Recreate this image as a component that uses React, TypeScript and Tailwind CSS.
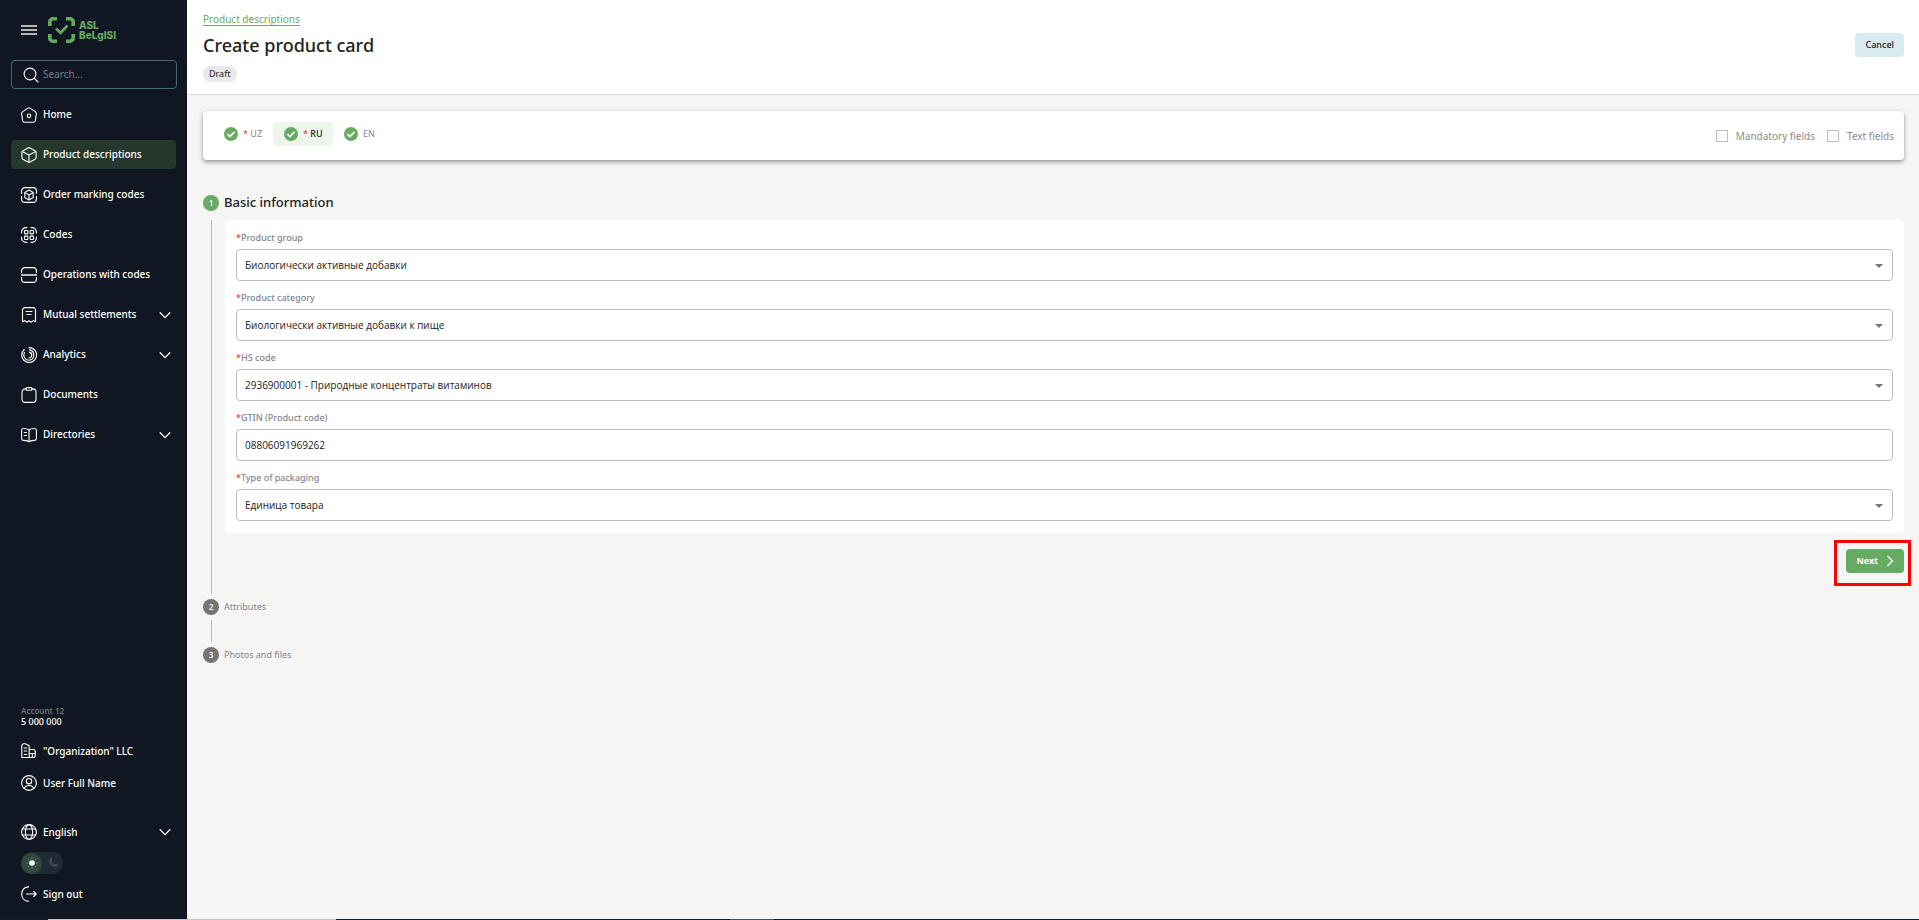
import { useState, type ReactNode } from "react";

const Icon = ({ children, className = "size-4" }: { children: ReactNode; className?: string }) => (
  <svg
    viewBox="0 0 16 16"
    fill="none"
    stroke="currentColor"
    strokeWidth="1.1"
    strokeLinecap="round"
    strokeLinejoin="round"
    aria-hidden="true"
    className={`${className} shrink-0`}
  >
    {children}
  </svg>
);

const Chevron = () => (
  <Icon className="size-3">
    <path d="M1.5 5 8 11.500 14.500 5" strokeWidth="1.700" />
  </Icon>
);

const icons = {
  home: (
    <>
      <path d="M7 1.100 1.700 4.600A2.400 2.400 0 0 0 .7 7l.9 6.300a2.400 2.400 0 0 0 2.300 2h8.200a2.400 2.400 0 0 0 2.300-2l.9-6.300a2.400 2.400 0 0 0-1-2.400L9 1.100a1.800 1.800 0 0 0-2 0Z" />
      <circle cx="8" cy="8.800" r="1.800" />
    </>
  ),
  box: (
    <>
      <path d="M7.100.9a2 2 0 0 1 1.800 0l5.200 2.800a2 2 0 0 1 1 1.700v5.200a2 2 0 0 1-1 1.700l-5.200 2.800a2 2 0 0 1-1.800 0l-5.200-2.800a2 2 0 0 1-1-1.700V5.400a2 2 0 0 1 1-1.700Z" />
      <path d="M1.300 4.500 8 8l6.700-3.500M8 8v7" />
    </>
  ),
  order: (
    <>
      <path d="M.6 6.500V4A3.400 3.400 0 0 1 4 .6h8A3.400 3.400 0 0 1 15.400 4v2.500M.6 9.500V12A3.400 3.400 0 0 0 4 15.400h8a3.400 3.400 0 0 0 3.400-3.400V9.500" />
      <path d="M8 3 12.200 5.400v5.200L8 13 3.800 10.600V5.400ZM4 5.600 8 8l4-2.400M8 8v4.700" />
    </>
  ),
  codes: (
    <>
      <path d="M.6 6V5A4.400 4.400 0 0 1 5 .6h1M10 .6h1A4.400 4.400 0 0 1 15.400 5v1M15.400 10v1a4.400 4.400 0 0 1-4.400 4.400h-1M6 15.400H5A4.400 4.400 0 0 1 .6 11v-1" />
      <rect x="3.500" y="3.500" width="3.400" height="3.400" rx=".6" />
      <rect x="9.100" y="3.500" width="3.400" height="3.400" rx=".6" />
      <rect x="3.500" y="9.100" width="3.400" height="3.400" rx=".6" />
      <rect x="9.100" y="9.100" width="3.400" height="3.400" rx=".6" />
    </>
  ),
  operations: (
    <>
      <path d="M.6 5.800V4A3.400 3.400 0 0 1 4 .6h8A3.400 3.400 0 0 1 15.400 4v1.800M.6 10.200V12A3.400 3.400 0 0 0 4 15.400h8a3.400 3.400 0 0 0 3.400-3.400v-1.800" />
      <path d="M.6 8h14.800" strokeWidth="1.800" strokeOpacity=".7" />
    </>
  ),
  settlements: (
    <>
      <path d="M1.500 3.300A2.600 2.600 0 0 1 4 .6h8a2.600 2.600 0 0 1 2.500 2.700v11.500l-2.300-1.200-2 1.600L8 13.700l-2.200 1.500-2-1.600-2.300 1.200Z" />
      <path d="M5 4.500h6M6 7.500h4" />
    </>
  ),
  analytics: (
    <>
      <path d="M3.200 2.500A7.400 7.400 0 1 0 8 .6" />
      <path d="M3.400 5.500A5.200 5.200 0 0 0 8 13.200 5.200 5.200 0 0 0 8.500 2.900" />
      <path d="M8 11a3 3 0 0 0 .5-5.900" />
    </>
  ),
  documents: (
    <>
      <path d="M5 1.900H4.400A3.400 3.400 0 0 0 1 5.300V12a3.400 3.400 0 0 0 3.400 3.400h7.200A3.400 3.400 0 0 0 15 12V5.300a3.400 3.400 0 0 0-3.400-3.400H11" />
      <path d="M6 .6h4a1 1 0 0 1 1 1v.7a1 1 0 0 1-1 1H6a1 1 0 0 1-1-1v-.7a1 1 0 0 1 1-1Z" />
    </>
  ),
  directories: (
    <>
      <path d="M8 3v11.500M8 3C6 1.500 4 1.300 2.200 1.500 1.200 1.600.6 2.200.6 3.200v8.600c0 .9.700 1.600 1.600 1.600 2 0 4 .1 5.800 1.300 1.800-1.200 3.800-1.300 5.800-1.300.9 0 1.600-.7 1.600-1.600V3.200c0-1-.6-1.600-1.600-1.700C12 1.300 10 1.500 8 3Z" />
      <path d="M3.200 5.500h2.200M3.200 8.500h2.200" />
    </>
  ),
  organization: (
    <>
      <path d="M.8 14.500V2.800a2 2 0 0 1 2-2.100h1.600l3.800 2.100v11.700ZM8.400 6.500h3.800a2 2 0 0 1 2 2v4a2 2 0 0 1-2 2H.8" />
      <path d="M3.200 5h2.600M3.200 8h2.600M8.400 10.500h5.600M11.300 10.500v4M3.200 11.500h2.600" />
    </>
  ),
  user: (
    <>
      <circle cx="8" cy="8" r="7.400" />
      <circle cx="8" cy="6.200" r="2.700" />
      <path d="M3.300 13.500c.6-2 2.400-3 4.700-3s4.100 1 4.700 3" />
    </>
  ),
  globe: (
    <>
      <circle cx="8" cy="8" r="7.400" />
      <ellipse cx="8" cy="8" rx="3.600" ry="7.400" />
      <path d="M1.300 5h13.400M1.300 11h13.400" />
    </>
  ),
  signOut: (
    <>
      <path d="M7.500.9C3.500 1 .7 4 .7 8s2.800 7 6.800 7.300" />
      <path d="M5.500 8h9.700M12.700 5.500 15.200 8l-2.500 2.500" />
    </>
  ),
};

type IconName = keyof typeof icons;

const navItems: { label: string; icon: IconName; active?: boolean; expandable?: boolean }[] = [
  { label: "Home", icon: "home" },
  { label: "Product descriptions", icon: "box", active: true },
  { label: "Order marking codes", icon: "order" },
  { label: "Codes", icon: "codes" },
  { label: "Operations with codes", icon: "operations" },
  { label: "Mutual settlements", icon: "settlements", expandable: true },
  { label: "Analytics", icon: "analytics", expandable: true },
  { label: "Documents", icon: "documents" },
  { label: "Directories", icon: "directories", expandable: true },
];

const Logo = () => (
  <a href="#" aria-label="ASL Belgisi" className="flex items-center gap-1 text-[#64a95f]">
    <svg viewBox="0 0 27 26" fill="none" stroke="currentColor" strokeWidth="3.600" className="h-[26px] w-[27px]" aria-hidden="true">
      <path d="M1.800 9V5a3.200 3.200 0 0 1 3.200-3.200h4M18 1.800h4A3.200 3.200 0 0 1 25.200 5v4M25.200 17v4a3.200 3.200 0 0 1-3.200 3.200h-4M9 24.200H5A3.200 3.200 0 0 1 1.800 21v-4" />
      <path d="m8 11.500 4.500 4.500 7-7.500" strokeWidth="2.600" />
    </svg>
    <span className="flex flex-col font-[Inter,sans-serif] text-[10px] leading-[10px] font-extrabold">
      <span>ASL</span>
      <span>BeLgISI</span>
    </span>
  </a>
);

const Sidebar = () => (
  <aside className="flex w-[187px] shrink-0 flex-col bg-[#111722] text-white">
    <div className="flex items-center gap-[11px] pt-[17px] pl-[21px]">
      <button type="button" aria-label="Menu" className="flex w-4 flex-col gap-[2px] text-[#b5b6ba]">
        <span className="h-[2px] bg-current" />
        <span className="h-[2px] bg-current" />
        <span className="h-[2px] bg-current" />
      </button>
      <Logo />
    </div>

    <label className="mr-[10px] ml-[11px] mt-[17px] flex h-[29px] items-center gap-1 rounded border border-[#426a7a] pl-[11px]">
      <Icon>
        <circle cx="7" cy="7" r="5.900" />
        <path d="m11.500 11.500 3.500 3.500" />
      </Icon>
      <input
        type="search"
        aria-label="Search"
        placeholder="Search..."
        className="w-0 grow bg-transparent text-[10px] outline-none placeholder:text-[#7b7f86]"
      />
    </label>

    <nav className="mx-[11px] mt-[11px] flex flex-col gap-[11px]">
      {navItems.map((item) => (
        <a
          key={item.label}
          href="#"
          aria-current={item.active ? "page" : undefined}
          className={`flex h-[29px] items-center gap-[6px] rounded pr-[5px] pl-[10px] text-[10px] font-medium ${item.active ? "bg-[#24382d]" : ""}`}
        >
          <Icon>{icons[item.icon]}</Icon>
          <span className="grow whitespace-nowrap">{item.label}</span>
          {item.expandable && <Chevron />}
        </a>
      ))}
    </nav>

    <div className="mt-auto flex flex-col pr-4 pb-[17px] pl-[21px] text-[10px] font-medium">
      <p className="text-[8px] leading-[11px] font-semibold text-[#70757e]">Account 12</p>
      <p className="text-[9px] leading-[11px]">5 000 000</p>
      <a href="#" className="mt-4 flex h-4 items-center gap-[6px]">
        <Icon>{icons.organization}</Icon>"Organization" LLC
      </a>
      <a href="#" className="mt-4 flex h-4 items-center gap-[6px]">
        <Icon>{icons.user}</Icon>User Full Name
      </a>
      <button type="button" className="mt-[33px] flex h-4 items-center gap-[6px] text-left">
        <Icon>{icons.globe}</Icon>
        <span className="grow">English</span>
        <Chevron />
      </button>
      <button type="button" aria-label="Theme" className="mt-3 flex h-[22px] w-[42px] items-center rounded-full bg-[#202b37]">
        <span className="flex size-[21px] items-center justify-center rounded-full bg-[#2f4a3c]">
          <svg viewBox="0 0 12 12" className="size-3" fill="white" stroke="white" aria-hidden="true">
            <circle cx="6" cy="6" r="2.800" stroke="none" />
            <path d="M6 .5v1M6 10.500v1M.5 6h1M10.500 6h1M2.100 2.100l.7.7M9.200 9.200l.7.7M2.100 9.900l.7-.7M9.200 2.800l.7-.7" strokeOpacity=".5" />
          </svg>
        </span>
        <span className="flex grow justify-center text-[#59636e]">
          <Icon className="size-[10px]">
            <path d="M5 1a7 7 0 1 0 10 10A8 8 0 0 1 5 1Z" strokeWidth="1.500" />
          </Icon>
        </span>
      </button>
      <a href="#" className="mt-3 flex h-4 items-center gap-[6px]">
        <Icon>{icons.signOut}</Icon>Sign out
      </a>
    </div>
  </aside>
);

const CheckBadge = () => (
  <svg viewBox="0 0 14 14" className="size-[14px] shrink-0" aria-hidden="true">
    <circle cx="7" cy="7" r="7" fill="#67ab62" />
    <path d="m3.500 7.200 2.400 2.300 4.600-4.600" fill="none" stroke="white" strokeWidth="1.700" />
  </svg>
);

const languages = [
  { code: "UZ", required: true },
  { code: "RU", required: true },
  { code: "EN", required: false },
];

const LanguageBar = () => {
  const [current, setCurrent] = useState("RU");
  return (
    <section className="flex h-[49px] items-start justify-between rounded bg-white pt-[11px] pr-[10px] pl-[10px] shadow-[0_2px_4px_rgba(60,70,60,0.55)]">
      <div className="flex" role="tablist">
        {languages.map(({ code, required }) => (
          <button
            key={code}
            type="button"
            role="tab"
            aria-selected={current === code}
            onClick={() => setCurrent(code)}
            className={`flex h-6 w-[60px] items-center gap-[5px] rounded pl-[11px] text-[9px] ${
              current === code ? "bg-[#edf5ed] font-medium text-[#222]" : "text-[#80858f]"
            }`}
          >
            <CheckBadge />
            <span>
              {required && <span className="text-[#d5443c]">* </span>}
              {code}
            </span>
          </button>
        ))}
      </div>
      <div className="flex h-7 items-center gap-3 text-[10px] text-[#8b8b8b]">
        {["Mandatory fields", "Text fields"].map((label) => (
          <label key={label} className="flex items-center gap-2">
            <input type="checkbox" className="size-3 appearance-none border border-[#bcbcbc] bg-white checked:bg-[#67ab62]" />
            {label}
          </label>
        ))}
      </div>
    </section>
  );
};

const fields = [
  { id: "group", label: "Product group", value: "Биологически активные добавки", select: true },
  { id: "category", label: "Product category", value: "Биологически активные добавки к пище", select: true },
  { id: "hs", label: "HS code", value: "2936900001 - Природные концентраты витаминов", select: true },
  { id: "gtin", label: "GTIN (Product code)", value: "08806091969262", select: false },
  { id: "packaging", label: "Type of packaging", value: "Единица товара", select: true },
];

const controlClass =
  "h-8 w-full appearance-none rounded border border-[#bdbdbd] bg-white px-2 font-['Open_Sans','Noto_Sans',sans-serif] text-[10px] text-[#222] outline-none";

const StepBadge = ({ number, active = false }: { number: number; active?: boolean }) => (
  <span
    className={`flex size-4 shrink-0 items-center justify-center rounded-full text-[8px] font-semibold text-white ${
      active ? "bg-[#67ab62]" : "bg-[#757575]"
    }`}
  >
    {number}
  </span>
);

export default function App() {
  return (
    <div className="flex min-h-screen flex-col bg-[#f5f5f3] font-['Noto_Sans','Open_Sans',sans-serif] text-[#222]">
      <div className="flex grow">
        <Sidebar />
        <div className="flex min-w-0 grow flex-col">
          <header className="flex items-start justify-between border-b border-[#dcdddf] bg-white pr-[15px] pb-3 pl-4">
            <div className="flex flex-col items-start pt-[13px]">
              <a href="#" className="border-b border-[#67ab62] text-[10px] leading-3 text-[#67ab62]">
                Product descriptions
              </a>
              <h1 className="mt-[7px] mb-[9px] text-[18px] leading-6 font-medium">Create product card</h1>
              <span className="rounded-full bg-[#e9e9e9] px-[6px] text-[9px] leading-4">Draft</span>
            </div>
            <button type="button" className="mt-[33px] h-6 rounded bg-[#d9ecf2] px-[10px] text-[9px] font-medium">
              Cancel
            </button>
          </header>

          <main className="pt-4 pr-[15px] pl-4">
            <LanguageBar />

            <ol className="mt-[35px] flex flex-col">
              <li>
                <div className="flex h-4 items-center gap-[5px]">
                  <StepBadge number={1} active />
                  <h2 className="text-[13px] font-medium">Basic information</h2>
                </div>
                <div className="mt-[9px] ml-2 border-l border-[#bdbdbd] pb-[21px] pl-[13px]">
                  <div className="flex flex-col gap-[10px] rounded bg-white px-[11px] pt-[11px] pb-3">
                    {fields.map((field) => (
                      <div key={field.id} className="flex flex-col">
                        <label htmlFor={field.id} className="pb-1 text-[9px] leading-[14px] font-medium text-[#80858f]">
                          <span className="text-[#d5443c]">*</span>
                          {field.label}
                        </label>
                        {field.select ? (
                          <div className="relative">
                            <select id={field.id} className={controlClass}>
                              <option>{field.value}</option>
                            </select>
                            <svg viewBox="0 0 8 4" className="pointer-events-none absolute top-[15px] right-[10px] h-1 w-2" aria-hidden="true">
                              <path d="M0 0h8L4 4Z" fill="#757575" />
                            </svg>
                          </div>
                        ) : (
                          <input id={field.id} defaultValue={field.value} className={controlClass} />
                        )}
                      </div>
                    ))}
                  </div>
                  <div className="relative mt-4 flex justify-end">
                    <button type="button" className="flex h-6 items-center gap-2 rounded bg-[#67ab62] px-[10px] text-[9px] font-bold text-white">
                      Next
                      <svg viewBox="0 0 8 12" className="h-3 w-2" fill="none" stroke="currentColor" strokeWidth="1.300" aria-hidden="true">
                        <path d="m1.500 1 5 5-5 5" />
                      </svg>
                    </button>
                    <span className="pointer-events-none absolute -top-[9px] -right-[7px] h-[46px] w-[77px] border-3 border-[#fb0007]" />
                  </div>
                </div>
              </li>
              <li className="mt-[5px]">
                <div className="flex h-4 items-center gap-[5px]">
                  <StepBadge number={2} />
                  <h2 className="text-[9px] text-[#80858f]">Attributes</h2>
                </div>
                <div className="my-[5px] ml-2 h-[22px] border-l border-[#bdbdbd]" />
              </li>
              <li className="flex h-4 items-center gap-[5px]">
                <StepBadge number={3} />
                <h2 className="text-[9px] text-[#80858f]">Photos and files</h2>
              </li>
            </ol>
          </main>
        </div>
      </div>
      <footer className="flex h-px bg-[#151b2b]">
        <span className="ml-12 w-72 bg-[#c3c3c3]" />
        <span className="ml-[394px] w-11 bg-[#4b5162]" />
      </footer>
    </div>
  );
}
